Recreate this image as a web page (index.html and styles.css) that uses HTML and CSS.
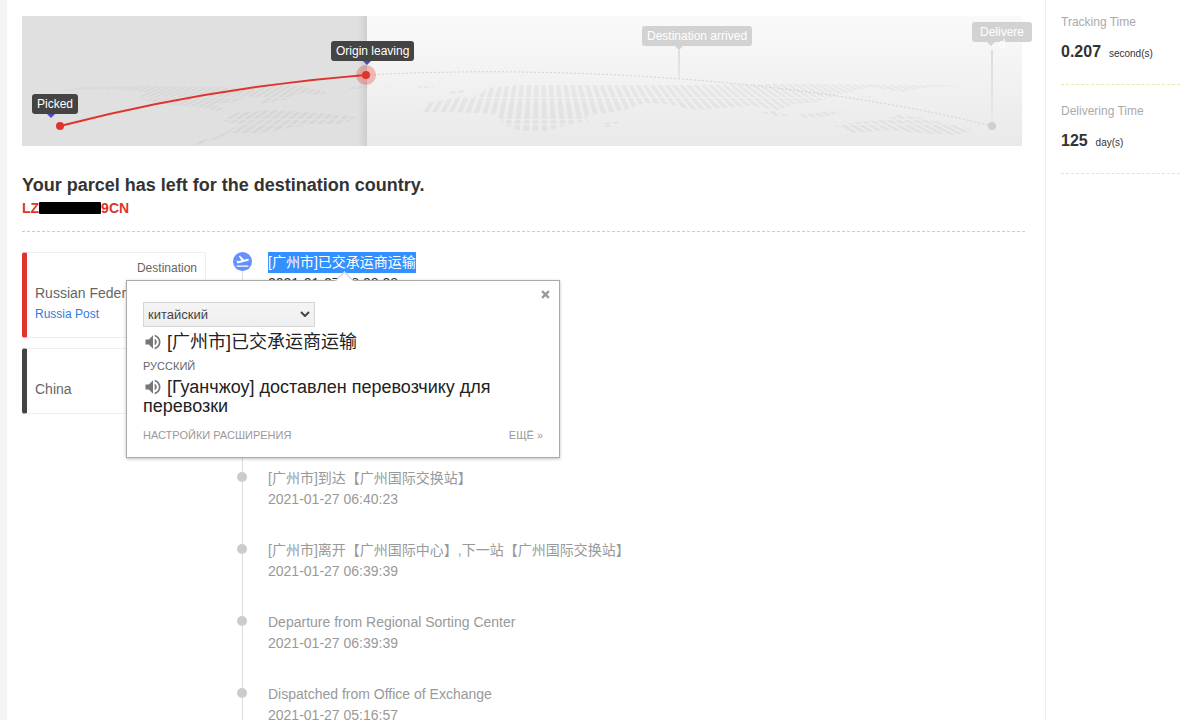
FILE: index.html
```html
<!DOCTYPE html>
<html lang="en">
<head>
    <meta charset="UTF-8">
    <meta name="viewport" content="width=device-width, initial-scale=1.0">
    <title>Parcel tracking</title>
    <link rel="stylesheet" href="styles.css">
</head>
<body>
    <div class="page">
        <main class="main">
            <!-- route map -->
            <div class="map">
                <svg class="map-svg" viewBox="0 0 1000 130" preserveAspectRatio="none">
                    <defs>
                        <linearGradient id="sky" x1="0" y1="0" x2="0" y2="1">
                            <stop offset="0" stop-color="#fafafa"/>
                            <stop offset="1" stop-color="#e9e9e9"/>
                        </linearGradient>
                        <linearGradient id="edge" x1="0" y1="0" x2="1" y2="0">
                            <stop offset="0" stop-color="#e0e0e0"/>
                            <stop offset="1" stop-color="#cecece"/>
                        </linearGradient>
                        <linearGradient id="pole" x1="0" y1="0" x2="0" y2="1">
                            <stop offset="0" stop-color="#dcdcdc"/>
                            <stop offset="1" stop-color="#e8e8e8"/>
                        </linearGradient>
                        <clipPath id="land">
                            <path d="M35 75L60 71 121 70 191 71 230 72 250 69 280 70 308 77 296 79 280 77 262 84 238 88 244 82 225 82 214 86 192 88 205 94 195 95 178 91 150 89 115 83 125 76 90 73 60 74z"/>
                            <path d="M211 97L251 94 298 97 335 101 321 108 285 109 238 117 211 117 178 129 170 127 195 120 218 109 201 105z"/>
                            <path d="M325 71L347 70 343 73 326 73zM395 70h16v2h-14zM363 69h5v1h-5z"/>
                            <path d="M398 95L405 87 428 83 431 80 450 81 458 77 468 72 495 69 558 69 678 69 735 68 918 69 941 70 901 72 881 76 868 74 848 71 828 76 812 80 795 86 775 88 755 94 728 90 675 94 668 94 651 89 625 87 595 96 565 99 566 106 551 107 525 115 498 115 481 108 475 99 458 97 401 96z"/>
                            <path d="M425 76L441 74 447 76 427 78zM580 107L601 105 587 111 581 111zM735 96L752 95 768 100 755 100zM776 99L801 96 825 95 801 101 783 102zM840 80h9v2h-9z"/>
                            <path d="M811 109L835 106 868 103 875 99 895 101 928 108 950 114 936 119 895 117 868 114 831 117z"/>
                        </clipPath>
                    </defs>
                    <rect width="1000" height="130" fill="url(#sky)"/>
                    <rect width="345" height="130" fill="#e0e0e0"/>
                    <rect x="336" width="9" height="130" fill="url(#edge)"/>
                    <g clip-path="url(#land)">
                        <path id="stripes" class="stripes"/>
                    </g>
                    <rect x="656" y="34" width="2" height="28" fill="url(#pole)"/>
                    <rect x="969" y="34" width="2" height="76" fill="url(#pole)"/>
                    <path class="route-left" d="M344 59C510 50 760 58 970 110"/>
                    <path class="route-done" d="M38 110Q190 71 344 59"/>
                    <circle cx="38" cy="110" r="4" fill="#e0332c"/>
                    <circle cx="344" cy="59" r="10" fill="#e0332c" fill-opacity=".3"/>
                    <circle cx="344" cy="59" r="4" fill="#e0332c"/>
                    <circle cx="970" cy="110" r="4" fill="#cfcfcf"/>
                </svg>
                <span class="pin pin-picked">Picked</span>
                <span class="pin pin-origin">Origin leaving</span>
                <span class="pin pin-off pin-arrived">Destination arrived</span>
                <span class="pin pin-off pin-delivered">Delivered</span>
            </div>

            <header class="status">
                <h1>Your parcel has left for the destination country.</h1>
                <p class="number">LZ<span class="masked"></span>9CN</p>
            </header>

            <div class="details">
                <div class="countries">
                    <section class="country country-to">
                        <p class="country-tag">Destination</p>
                        <h2>Russian Federation</h2>
                        <a href="#">Russia Post</a>
                    </section>
                    <section class="country country-from">
                        <h2>China</h2>
                    </section>
                </div>

                <ul class="timeline">
                    <li class="current">
                        <svg class="plane" viewBox="0 0 38 38">
                            <circle cx="19" cy="19" r="19" fill="#6690ff"/>
                            <path transform="translate(4 3) scale(1.25)" fill="#fff" d="M2.500 19h19v2h-19zM22.070 9.640c-.21-.8-1.040-1.280-1.840-1.060L14.920 10 8.020 3.570 6.090 4.080l4.140 7.170-4.970 1.330-1.970-1.540-1.450.39 2.590 4.490L21 11.490c.81-.23 1.280-1.050 1.070-1.850z"/>
                        </svg>
                        <p><span class="selected">[广州市]已交承运商运输</span></p>
                        <p>2021-01-27 08:08:08</p>
                    </li>
                    <li>
                        <p>[广州市]到达【广州国际交换站】</p>
                        <p>2021-01-27 06:40:23</p>
                    </li>
                    <li>
                        <p>[广州市]离开【广州国际中心】,下一站【广州国际交换站】</p>
                        <p>2021-01-27 06:39:39</p>
                    </li>
                    <li>
                        <p>Departure from Regional Sorting Center</p>
                        <p>2021-01-27 06:39:39</p>
                    </li>
                    <li>
                        <p>Dispatched from Office of Exchange</p>
                        <p>2021-01-27 05:16:57</p>
                    </li>
                </ul>

                <!-- translation bubble -->
                <div class="bubble" lang="ru">
                    <button class="close" type="button" aria-label="Закрыть">
                        <svg viewBox="0 0 8 8"><path d="M1 1l6 6M7 1L1 7"/></svg>
                    </button>
                    <div class="language">
                        <select aria-label="Язык оригинала">
                            <option>китайский</option>
                        </select>
                        <svg class="chevron" viewBox="0 0 10 6"><path d="M1 1l4 4 4-4"/></svg>
                    </div>
                    <p class="source">
                        <button class="speak" type="button" aria-label="Прослушать">
                            <svg viewBox="0 0 24 24"><path d="M3 9v6h4l5 5V4L7 9H3zm13.500 3c0-1.770-1.020-3.290-2.500-4.030v8.050c1.480-.73 2.500-2.250 2.500-4.020zM14 3.230v2.060c2.890.86 5 3.540 5 6.710s-2.110 5.850-5 6.710v2.060c4.010-.91 7-4.490 7-8.770s-2.990-7.860-7-8.770z"/></svg>
                        </button>[广州市]已交承运商运输</p>
                    <p class="target-language">РУССКИЙ</p>
                    <p class="target">
                        <button class="speak" type="button" aria-label="Прослушать">
                            <svg viewBox="0 0 24 24"><path d="M3 9v6h4l5 5V4L7 9H3zm13.500 3c0-1.770-1.020-3.290-2.500-4.030v8.050c1.480-.73 2.500-2.250 2.500-4.020zM14 3.230v2.060c2.890.86 5 3.540 5 6.710s-2.110 5.850-5 6.710v2.060c4.010-.91 7-4.490 7-8.770s-2.990-7.860-7-8.770z"/></svg>
                        </button>[Гуанчжоу] доставлен перевозчику для перевозки</p>
                    <div class="bubble-links">
                        <a href="#">НАСТРОЙКИ РАСШИРЕНИЯ</a>
                        <a href="#">ЕЩЁ »</a>
                    </div>
                </div>
            </div>
        </main>

        <aside class="side">
            <div class="stat">
                <h3>Tracking Time</h3>
                <p><b>0.207</b> <small>second(s)</small></p>
            </div>
            <div class="stat">
                <h3>Delivering Time</h3>
                <p><b>125</b> <small>day(s)</small></p>
            </div>
        </aside>
    </div>

    <script>
        // stripes run from one vanishing point above the map, the land shapes clip them
        var vx = 518, vy = -90
        var rows = [68, 82, 104, 109, 130]
        var d = ''
        for (var x = -500; x < 1600; x += 10) {
            for (var i = 0; i < rows.length - 1; i++) {
                var a = (rows[i] - vy) / (130 - vy)
                var b = (rows[i + 1] - 1 - vy) / (130 - vy)
                var l = x - vx, r = x + 6 - vx
                d += 'M' + (vx + l * a) + ' ' + rows[i] +
                    'L' + (vx + r * a) + ' ' + rows[i] +
                    ' ' + (vx + r * b) + ' ' + (rows[i + 1] - 1) +
                    ' ' + (vx + l * b) + ' ' + (rows[i + 1] - 1) + 'z'
            }
        }
        document.getElementById('stripes').setAttribute('d', d)
    </script>
</body>
</html>
```
FILE: styles.css
```css
* {
  box-sizing: border-box;
}
body, h1, h2, h3, p, ul {
  margin: 0;
  padding: 0;
}
body {
  background: #f4f4f4;
  color: #333;
  font-family: "Liberation Sans", Arial, "Noto Sans CJK SC", sans-serif;
  font-size: 14px;
}
a {
  text-decoration: none;
}
button {
  padding: 0;
  border: 0;
  background: none;
  cursor: pointer;
}
.page {
  display: flex;
  min-height: 100vh;
  margin-left: 7px;
  background: #fff;
}
.main {
  flex: 1;
  min-width: 0;
  padding: 16px 20px 0 15px;
}

/* map */
.map {
  position: relative;
  margin-right: 3px;
}
.map-svg {
  display: block;
  width: 100%;
  height: 130px;
}
.stripes {
  fill: #000;
  fill-opacity: .04;
}
.route-done {
  fill: none;
  stroke: #e0332c;
  stroke-width: 2;
}
.route-left {
  fill: none;
  stroke: #d2d2d2;
  stroke-dasharray: 2 2;
}
.pin {
  position: absolute;
  height: 20px;
  padding: 4px 5px;
  border-radius: 3px;
  background: #444;
  color: #fff;
  font-size: 12px;
  line-height: 12px;
  text-align: center;
  white-space: nowrap;
}
.pin::after {
  content: "";
  position: absolute;
  top: 100%;
  left: 50%;
  margin-left: -4px;
  border: 4px solid transparent;
  border-top-color: #4a4ac8;
  border-bottom: 0;
}
.pin-picked {
  left: 1%;
  top: 78px;
}
.pin-picked::after {
  left: 19px;
}
.pin-origin {
  left: 30.9%;
  top: 25px;
}
.pin-origin::after {
  left: 36px;
}
.pin-off {
  background: #d2d2d2;
}
.pin-off::after {
  border-top-color: #d2d2d2;
}
.pin-arrived {
  left: 62%;
  top: 10px;
}
.pin-arrived::after {
  left: 37px;
}
.pin-delivered {
  left: 95%;
  top: 6px;
  width: 60px;
  white-space: normal;
  word-break: break-all;
}
.pin-delivered::after {
  left: 19px;
}

/* status */
.status {
  margin-top: 27px;
  padding-bottom: 12px;
  border-bottom: 1px dashed #ccc;
}
.status h1 {
  font-size: 18px;
  line-height: 24px;
}
.number {
  color: #e0332c;
  font-weight: bold;
  line-height: 22px;
}
.masked {
  display: inline-block;
  width: 62px;
  height: 12px;
  border-radius: 1px;
  background: #000;
  vertical-align: -1px;
}

/* details */
.details {
  position: relative;
  display: flex;
  gap: 26px;
  margin-top: 20px;
}
.countries {
  display: flex;
  flex-direction: column;
  gap: 10px;
  width: 184px;
}
.country {
  padding: 5px 8px 13px;
  border: 1px solid #eee;
  border-left: 5px solid #444;
  border-radius: 3px;
  color: #666;
}
.country-to {
  border-left-color: #e0332c;
}
.country-from {
  padding: 29px 8px 13px;
}
.country-tag {
  font-size: 12px;
  line-height: 20px;
  text-align: right;
}
.country h2 {
  font-size: 14px;
  font-weight: normal;
  line-height: 22px;
  white-space: nowrap;
}
.country-to h2 {
  margin-top: 4px;
}
.country a {
  display: block;
  color: #2b7de0;
  font-size: 12px;
  line-height: 20px;
}
.timeline {
  flex: 1;
  list-style: none;
  line-height: 21px;
}
.timeline li {
  position: relative;
  padding: 0 0 30px 36px;
  color: #999;
}
.timeline li::before {
  content: "";
  position: absolute;
  top: 10px;
  bottom: -10px;
  left: 10px;
  width: 1px;
  background: #ddd;
}
.timeline li::after {
  content: "";
  position: absolute;
  top: 4px;
  left: 5px;
  width: 10px;
  height: 10px;
  border-radius: 50%;
  background: #ccc;
}
.timeline .current {
  padding-bottom: 174px;
  color: #333;
}
.timeline .current::after {
  display: none;
}
.plane {
  position: absolute;
  top: 0;
  left: 1px;
  width: 19px;
  height: 19px;
}
.selected {
  display: inline-block;
  background: #3390ff;
  color: #fff;
}

/* bubble */
.bubble {
  position: absolute;
  top: 28px;
  left: 104px;
  width: 434px;
  padding: 21px 16px 15px;
  border: 1px solid #aaa;
  background: #fff;
  box-shadow: 0 1px 3px rgba(0, 0, 0, .25);
  color: #222;
  font-size: 18px;
}
.bubble::before {
  content: "";
  position: absolute;
  top: -7px;
  left: 211px;
  width: 12px;
  height: 12px;
  border: 1px solid #ccc;
  border-right: 0;
  border-bottom: 0;
  background: #fff;
  transform: rotate(45deg);
}
.close {
  position: absolute;
  top: 9px;
  right: 9px;
  width: 9px;
  height: 9px;
}
.close svg {
  display: block;
  fill: none;
  stroke: #999;
  stroke-width: 2;
}
.language {
  position: relative;
  width: 172px;
}
.language select {
  display: block;
  width: 100%;
  height: 25px;
  padding: 0 4px;
  border: 1px solid #d5d5d5;
  border-radius: 0;
  background: linear-gradient(#f5f5f5, #eee);
  color: #444;
  font-family: inherit;
  font-size: 13px;
  appearance: none;
}
.chevron {
  position: absolute;
  top: 9px;
  right: 5px;
  width: 10px;
  height: 6px;
  fill: none;
  stroke: #444;
  stroke-width: 2;
  pointer-events: none;
}
.source {
  margin-top: 5px;
  line-height: 20px;
}
.speak {
  width: 20px;
  height: 16px;
  margin-right: 4px;
  vertical-align: -2px;
}
.speak svg {
  display: block;
  width: 20px;
  height: 20px;
  margin-top: -2px;
  fill: #777;
}
.target-language {
  margin-top: 7px;
  color: #666;
  font-size: 11px;
  line-height: 14px;
}
.target {
  margin-top: 5px;
  line-height: 19px;
}
.bubble-links {
  display: flex;
  justify-content: space-between;
  margin-top: 12px;
  font-size: 11px;
  line-height: 14px;
}
.bubble-links a {
  color: #999;
}

/* side */
.side {
  width: 146px;
  padding: 12px 11px 0 15px;
  border-left: 1px solid #eee;
}
.stat {
  height: 73px;
  margin-bottom: 16px;
  border-bottom: 1px dashed #e8e8a8;
}
.stat h3 {
  color: #aaa;
  font-size: 12px;
  font-weight: normal;
  line-height: 20px;
}
.stat p {
  margin-top: 8px;
  line-height: 24px;
}
.stat b {
  font-size: 16px;
}
.stat small {
  margin-left: 4px;
  font-size: 10px;
}
```
